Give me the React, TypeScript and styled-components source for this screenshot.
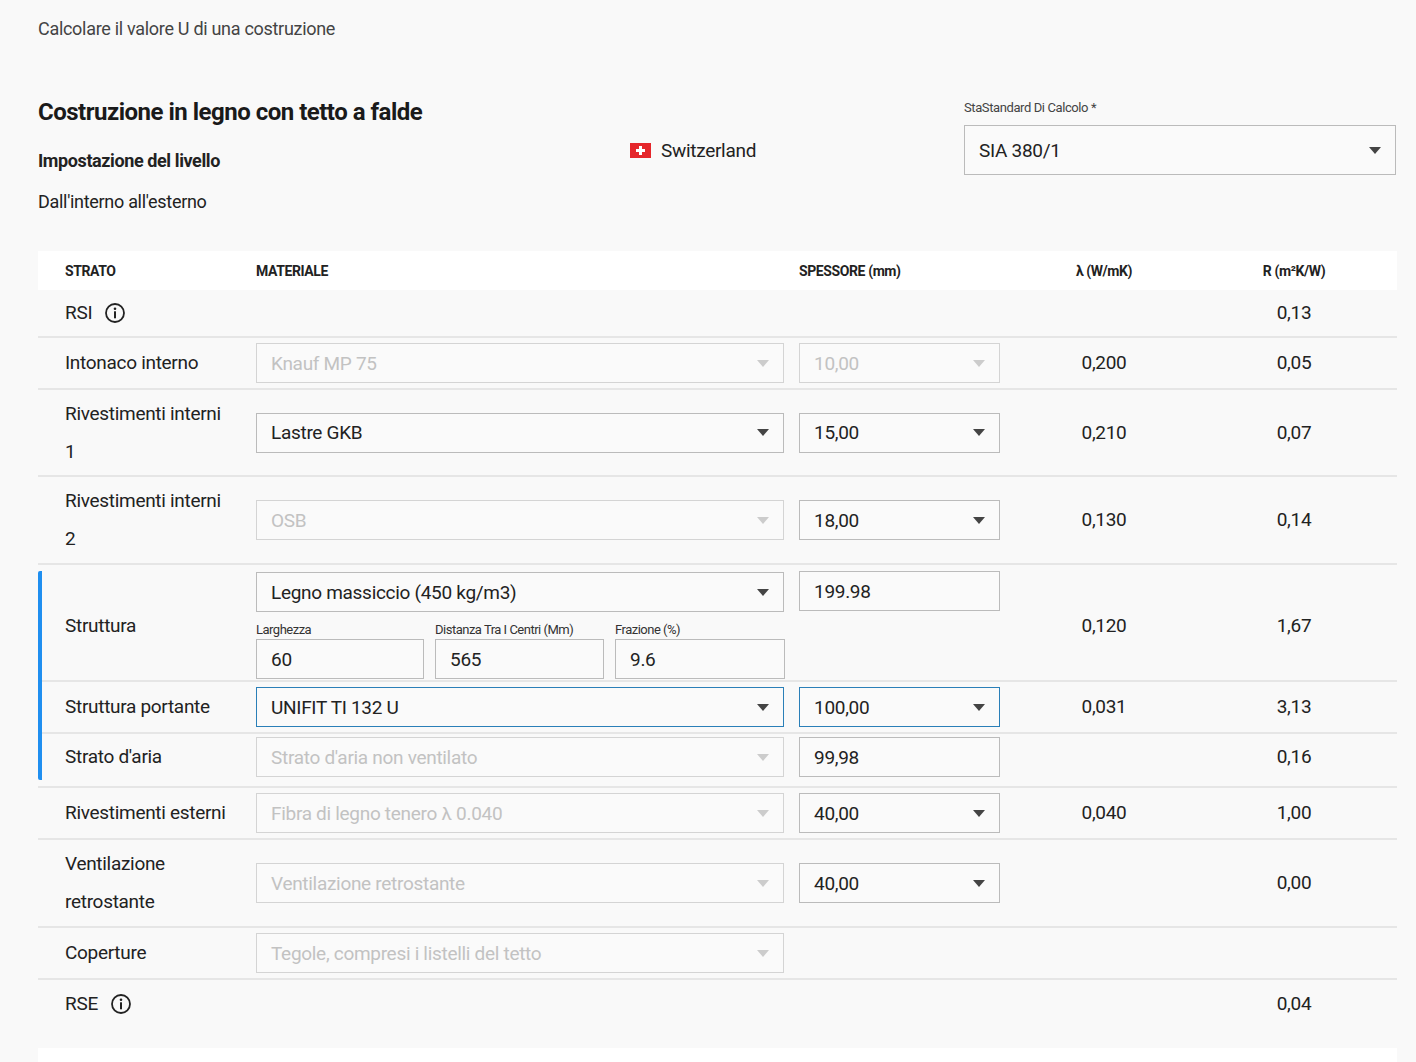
import React from "react";
import styled, { createGlobalStyle, css } from "styled-components";

const Global = createGlobalStyle`
  body { margin: 0; background: #f9f9f9; font-family: Roboto, "Noto Sans", sans-serif; color: #222; }
`;

const Page = styled.div`
  padding: 18px 19px 0 38px;
  width: 1416px;
  box-sizing: border-box;
  height: 1062px;
  overflow: hidden;
`;
const Crumb = styled.div`font-size: 18px; color: #444; letter-spacing: -0.3px;`;
const Header = styled.div`
  display: grid; grid-template-columns: 590px 336px 432px; margin-top: 50px; align-items: start;
`;
const Title = styled.h1`font-size: 24px; font-weight: 700; margin: 9px 0 0; letter-spacing: -0.5px; color: #1a1a1a;`;
const Sub = styled.h2`font-size: 18px; font-weight: 700; margin: 24px 0 0; letter-spacing: -0.4px;`;
const Plain = styled.div`font-size: 18px; margin-top: 20px; letter-spacing: -0.3px;`;
const Country = styled.div`display: flex; align-items: center; gap: 10px; font-size: 19px; margin-top: 50px; padding-left: 2px; letter-spacing: -0.3px;`;
const Right = styled.div`padding-top: 11px;`;
const Label = styled.div`font-size: 13px; color: #444; letter-spacing: -0.4px; margin-bottom: 10px;`;
const Select = styled.div<{ $h?: number; $state?: "dis" | "focus" | "plain" }>`
  height: ${p => p.$h ?? 40}px; box-sizing: border-box; border: 1.5px solid #bbb; background: #fafafa;
  display: flex; align-items: center; justify-content: space-between; padding: 0 14px;
  font-size: 19px; letter-spacing: -0.3px; color: #222;
  ${p => p.$state === "dis" && css`color: #c2c2c2; border-color: #d4d4d4;`}
  ${p => p.$state === "focus" && css`border-color: #2a7fb8;`}
`;
const Arrow = styled.span<{ $dim?: boolean }>`
  width: 0; height: 0; border-left: 6px solid transparent; border-right: 6px solid transparent;
  border-top: 7px solid ${p => (p.$dim ? "#ccc" : "#444")};
`;
const Table = styled.div`margin-top: 39px; width: 1359px;`;
const Row = styled.div<{ $head?: boolean; $h: number; $inGroup?: boolean; $noLine?: boolean }>`
  display: grid; grid-template-columns: 191px 543px 201px 208px 172px; align-items: center;
  padding-left: 27px; height: ${p => p.$h}px; box-sizing: border-box;
  background: ${p => (p.$head ? "#fff" : "transparent")};
  border-bottom: ${p => (p.$head || p.$noLine ? "none" : "2px solid #e6e6e6")};
  ${p => p.$inGroup && css`padding-left: 23px;`}
`;
const Th = styled.div<{ $c?: boolean }>`font-size: 14px; font-weight: 700; letter-spacing: -0.4px; text-align: ${p => p.$c ? "center" : "left"};`;
const Cell = styled.div<{ $c?: boolean }>`font-size: 19px; letter-spacing: -0.3px; line-height: 38px; text-align: ${p => p.$c ? "center" : "left"}; display: flex; align-items: center; gap: 12px; justify-content: ${p => p.$c ? "center" : "flex-start"};`;
const InCol = styled.div`padding-right: 15px;`;
const Group = styled.div`border-left: 4px solid #1f8ff0; border-radius: 2px; margin: 6px 0;`;
const Sub3 = styled.div`display: grid; grid-template-columns: 168px 169px 170px; gap: 11px; margin-top: 10px;`;
const SmallLabel = styled.div`font-size: 13px; color: #333; letter-spacing: -0.5px; margin-bottom: 2px;`;
const Top = styled.div`align-self: start;`;
const Divider = styled.div`border-top: 2px solid #e6e6e6;`;
const Spacer = styled.div<{ $white?: boolean }>`height: 20px; background: ${p => p.$white ? "#fff" : "transparent"};`;

const Info = () => (
  <svg width="22" height="22" viewBox="0 0 22 22"><circle cx="11" cy="11" r="9" fill="none" stroke="#222" strokeWidth="1.8"/><circle cx="11" cy="6.7" r="1.3" fill="#222"/><rect x="10" y="9.3" width="2" height="7" fill="#222"/></svg>
);
const Flag = () => (
  <svg width="21" height="15" viewBox="0 0 21 15"><rect width="21" height="15" fill="#e5262b"/><rect x="9" y="3" width="3" height="9" fill="#fff"/><rect x="6" y="6" width="9" height="3" fill="#fff"/></svg>
);

const Sel = ({ v, s }: { v: string; s?: "dis" | "focus" }) => (
  <Select $state={s}>{v}<Arrow $dim={s === "dis"} /></Select>
);

export default function App() {
  return (
    <Page>
      <Global />
      <Crumb>Calcolare il valore U di una costruzione</Crumb>
      <Header>
        <div>
          <Title>Costruzione in legno con tetto a falde</Title>
          <Sub>Impostazione del livello</Sub>
          <Plain>Dall'interno all'esterno</Plain>
        </div>
        <Country><Flag />Switzerland</Country>
        <Right>
          <Label>StaStandard Di Calcolo *</Label>
          <Select $h={50}>SIA 380/1<Arrow /></Select>
        </Right>
      </Header>
      <Table>
        <Row $head $h={39}>
          <Th>STRATO</Th><Th>MATERIALE</Th><Th>SPESSORE (mm)</Th><Th $c>λ (W/mK)</Th><Th $c>R (m²K/W)</Th>
        </Row>
        <Row $h={48}><Cell>RSI <Info /></Cell><div /><div /><div /><Cell $c>0,13</Cell></Row>
        <Row $h={52}><Cell>Intonaco interno</Cell><InCol><Sel v="Knauf MP 75" s="dis" /></InCol><Sel v="10,00" s="dis" /><Cell $c>0,200</Cell><Cell $c>0,05</Cell></Row>
        <Row $h={87}><Cell>Rivestimenti interni<br />1</Cell><InCol><Sel v="Lastre GKB" /></InCol><Sel v="15,00" /><Cell $c>0,210</Cell><Cell $c>0,07</Cell></Row>
        <Row $h={88}><Cell>Rivestimenti interni<br />2</Cell><InCol><Sel v="OSB" s="dis" /></InCol><Sel v="18,00" /><Cell $c>0,130</Cell><Cell $c>0,14</Cell></Row>
        <Group>
          <Row $h={111} $inGroup>
            <Cell>Struttura</Cell>
            <InCol>
              <Sel v="Legno massiccio (450 kg/m3)" />
              <Sub3>
                <div><SmallLabel>Larghezza</SmallLabel><Select>60</Select></div>
                <div><SmallLabel>Distanza Tra I Centri (Mm)</SmallLabel><Select>565</Select></div>
                <div><SmallLabel>Frazione (%)</SmallLabel><Select>9.6</Select></div>
              </Sub3>
            </InCol>
            <Top><Select>199.98</Select></Top>
            <Cell $c>0,120</Cell><Cell $c>1,67</Cell>
          </Row>
          <Row $h={52} $inGroup><Cell>Struttura portante</Cell><InCol><Sel v="UNIFIT TI 132 U" s="focus" /></InCol><Sel v="100,00" s="focus" /><Cell $c>0,031</Cell><Cell $c>3,13</Cell></Row>
          <Row $h={46} $inGroup $noLine><Cell>Strato d'aria</Cell><InCol><Sel v="Strato d'aria non ventilato" s="dis" /></InCol><Select>99,98</Select><div /><Cell $c>0,16</Cell></Row>
        </Group>
        <Divider />
        <Row $h={52}><Cell>Rivestimenti esterni</Cell><InCol><Sel v="Fibra di legno tenero λ 0.040" s="dis" /></InCol><Sel v="40,00" /><Cell $c>0,040</Cell><Cell $c>1,00</Cell></Row>
        <Row $h={88}><Cell>Ventilazione<br />retrostante</Cell><InCol><Sel v="Ventilazione retrostante" s="dis" /></InCol><Sel v="40,00" /><div /><Cell $c>0,00</Cell></Row>
        <Row $h={52}><Cell>Coperture</Cell><InCol><Sel v="Tegole, compresi i listelli del tetto" s="dis" /></InCol><div /><div /><div /></Row>
        <Row $h={48} $noLine><Cell>RSE <Info /></Cell><div /><div /><div /><Cell $c>0,04</Cell></Row>
        <Spacer />
        <Spacer $white />
      </Table>
    </Page>
  );
}
